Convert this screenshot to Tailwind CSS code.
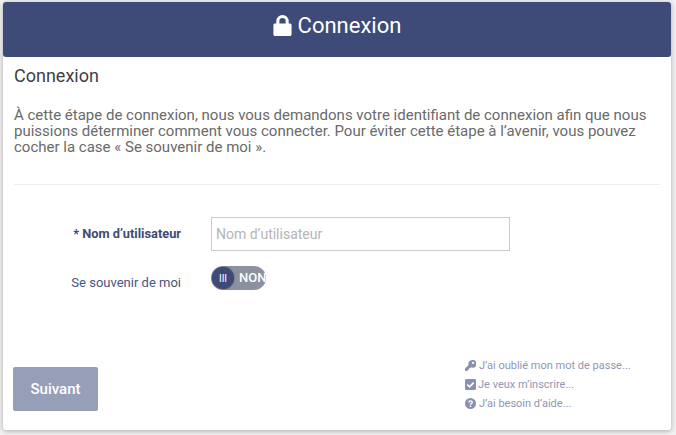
<!DOCTYPE html>
<html lang="fr">
<head>
    <meta charset="UTF-8">
    <title>Connexion</title>
    <script src="https://cdn.jsdelivr.net/npm/@tailwindcss/browser@4"></script>
</head>
<body class="bg-[#f1f1f1] h-[435px] overflow-hidden font-['Roboto',sans-serif]">
    <div class="mx-[3px] mt-[2px] w-[668px] h-[428px] bg-white rounded-[3px] shadow-[0_1px_5px_rgba(0,0,0,0.3)] flex flex-col">
        <!-- Header -->
        <div class="h-[55px] pb-[8px] bg-[#3e4a77] rounded-[3px] flex items-center justify-center gap-[6px] text-white">
            <svg class="w-[19px] h-[21px]" viewBox="0 0 19 22" fill="#fff"><path d="M3 9V6.500a6.500 6.500 0 0 1 13 0V9h1.400c.9 0 1.600.7 1.600 1.600v9.800c0 .9-.7 1.600-1.600 1.600H1.600C.7 22 0 21.300 0 20.400v-9.800C0 9.700.7 9 1.600 9zm3.200 0h6.600V6.500a3.300 3.300 0 0 0-6.600 0z"/></svg>
            <span class="text-[22px] leading-none">Connexion</span>
        </div>

        <div class="px-[11px] flex-1 flex flex-col">
            <h2 class="mt-[9px] text-[18px] leading-[20px] text-[#3f3f3f]">Connexion</h2>
            <p class="mt-[21px] text-[15px] leading-[16px] text-[#6a6a6a]">À cette étape de connexion, nous vous demandons votre identifiant de connexion afin que nous puissions déterminer comment vous connecter. Pour éviter cette étape à l’avenir, vous pouvez cocher la case « Se souvenir de moi ».</p>
            <div class="mt-[29px] border-t border-[#eee]"></div>

            <!-- Form -->
            <div class="mt-[32px] flex items-center">
                <label class="w-[167px] text-right text-[12.8px] font-bold text-[#3e4a77]">* Nom d’utilisateur</label>
                <input class="ml-[30px] w-[299px] h-[34px] border border-[#ccc] px-[4px] text-[14px] placeholder:text-[#b5b5b5]" placeholder="Nom d’utilisateur">
            </div>
            <div class="mt-[15px] flex items-start">
                <label class="w-[167px] text-right text-[13px] text-[#4a5580] pt-[7px]">Se souvenir de moi</label>
                <div class="ml-[30px] w-[55px] h-[24px] rounded-full bg-[#8b919f] overflow-hidden flex items-center">
                    <span class="w-[22px] h-[22px] ml-px shrink-0 rounded-full bg-[#3e4a77] shadow-[0_0_2px_rgba(0,0,0,0.5)] text-white text-[10px] flex items-center justify-center">III</span>
                    <span class="ml-[5px] text-white text-[13px] font-medium">NON</span>
                </div>
            </div>

            <!-- Footer -->
            <div class="mt-auto mb-[19px] flex justify-between items-end">
                <button class="-ml-px w-[85px] h-[44px] rounded-[2px] bg-[#979eb8] text-white text-[15px] font-medium">Suivant</button>
                <ul class="w-[195px] text-[11px] leading-[19px] text-[#9096b3] -mb-[2px]">
                    <li class="flex items-center gap-[3px]">
                        <svg class="w-[11px] h-[11px]" viewBox="0 0 12 12" fill="#8a90ae"><path d="M7.800 0a4.200 4.200 0 0 0-4 5.400L0 9.200V12h2.800v-1.500h1.500V9h1.500l1-1A4.200 4.200 0 1 0 7.800 0zm1 2a1.200 1.200 0 1 1 0 2.400 1.200 1.200 0 0 1 0-2.400z"/></svg>
                        <span>J’ai oublié mon mot de passe...</span>
                    </li>
                    <li class="flex items-center gap-[2px]">
                        <svg class="w-[11px] h-[11px]" viewBox="0 0 12 12"><rect width="12" height="12" rx="1.500" fill="#8a90ae"/><path d="M2.500 6l2.500 2.500 4.500-4.500" fill="none" stroke="#fff" stroke-width="1.800"/></svg>
                        <span>Je veux m’inscrire...</span>
                    </li>
                    <li class="flex items-center gap-[3px]">
                        <svg class="w-[11px] h-[11px]" viewBox="0 0 12 12"><circle cx="6" cy="6" r="6" fill="#8a90ae"/><path d="M4.200 4.800c0-2.200 3.700-2.200 3.700-.1 0 1.300-1.900 1.400-1.900 2.600" fill="none" stroke="#fff" stroke-width="1.500"/><rect x="5.200" y="8.200" width="1.600" height="1.600" fill="#fff"/></svg>
                        <span>J’ai besoin d’aide...</span>
                    </li>
                </ul>
            </div>
        </div>
    </div>
</body>
</html>
